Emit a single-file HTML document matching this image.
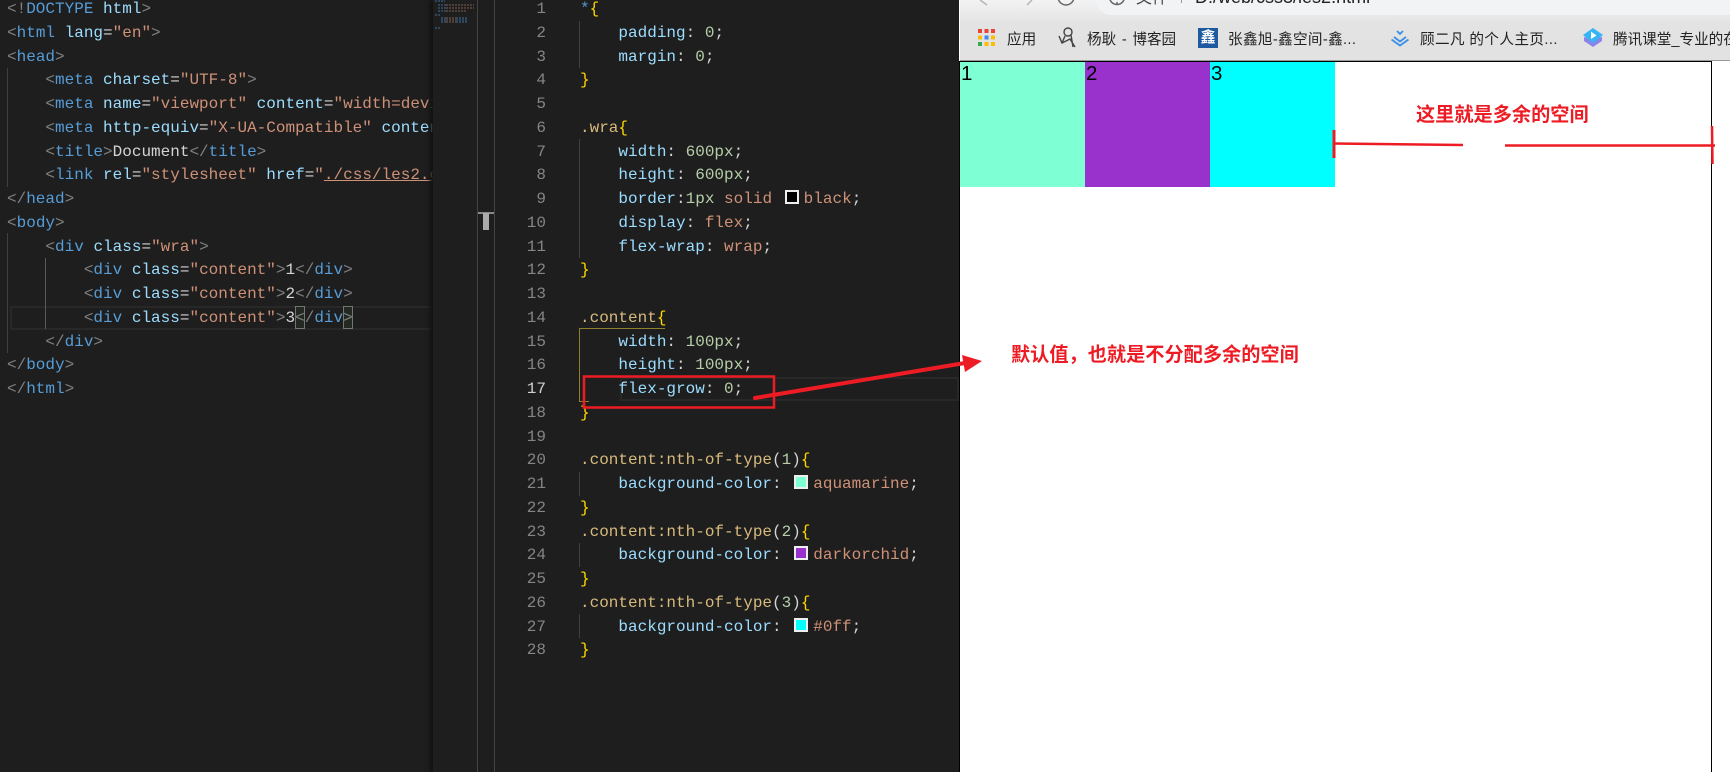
<!DOCTYPE html>
<html lang="zh"><head><meta charset="utf-8"><title>Flex grow</title>
<style>
*{margin:0;padding:0;box-sizing:border-box}
html,body{width:1730px;height:772px;overflow:hidden;background:#1e1e1e}
body{position:relative;font-family:"Liberation Sans","Noto Sans CJK SC",sans-serif}
.abs{position:absolute}
pre{position:absolute;font:16px/23.75px "Liberation Mono",monospace;color:#d4d4d4;white-space:pre;z-index:2}
.b{color:#808080}.t{color:#569cd6}.a{color:#9cdcfe}.s{color:#ce9178}.w{color:#d4d4d4}
.y{color:#ffd700}.c{color:#d7ba7d}.n{color:#b5cea8}
.sw{display:inline-block;width:14px;height:14px;border:2px solid #eee;vertical-align:-1px;margin:0 5px 0 3px}
#nums{left:495px;width:51px;text-align:right;top:-2px;color:#858585}
.g{position:absolute;width:1px;background:#404040;z-index:1}
.bm{position:absolute;top:30px;font-size:14.6px;line-height:20px;color:#222;white-space:nowrap;z-index:4}
.red{position:absolute;color:#ed1c24;font-weight:bold;font-size:19.2px;line-height:24px;white-space:nowrap;z-index:6}
.box{position:absolute;top:62px;width:125px;height:125px;z-index:3;color:#000;font-size:20.5px;line-height:24px;padding-left:1px}
</style></head><body>
<div class="abs" style="left:10px;top:306px;width:423px;height:24px;border:2px solid #282828;z-index:0"></div>
<div class="abs" style="left:620px;top:377px;width:339px;height:24px;border:2px solid #282828;z-index:0"></div>
<div class="g" style="left:7px;top:68px;height:119px"></div>
<div class="g" style="left:7px;top:233px;height:120px"></div>
<div class="g" style="left:45px;top:258px;height:71px;background:#5a5a5a"></div>
<div class="abs" style="left:295px;top:306px;width:10px;height:23px;border:1px solid #6f7a6f;background:#232823;z-index:1"></div>
<div class="abs" style="left:343px;top:306px;width:10px;height:23px;border:1px solid #6f7a6f;background:#232823;z-index:1"></div>
<div style="position:absolute;left:0;top:0;width:433px;height:772px;overflow:hidden;z-index:2">
<pre style="left:7px;top:-2px"><span class="b">&lt;!</span><span class="t">DOCTYPE</span> <span class="a">html</span><span class="b">&gt;</span>
<span class="b">&lt;</span><span class="t">html</span> <span class="a">lang</span><span class="w">=</span><span class="s">"en"</span><span class="b">&gt;</span>
<span class="b">&lt;</span><span class="t">head</span><span class="b">&gt;</span>
    <span class="b">&lt;</span><span class="t">meta</span> <span class="a">charset</span><span class="w">=</span><span class="s">"UTF-8"</span><span class="b">&gt;</span>
    <span class="b">&lt;</span><span class="t">meta</span> <span class="a">name</span><span class="w">=</span><span class="s">"viewport"</span> <span class="a">content</span><span class="w">=</span><span class="s">"width=device-width"</span>
    <span class="b">&lt;</span><span class="t">meta</span> <span class="a">http-equiv</span><span class="w">=</span><span class="s">"X-UA-Compatible"</span> <span class="a">content</span><span class="w">=</span><span class="s">"ie=edge"</span>
    <span class="b">&lt;</span><span class="t">title</span><span class="b">&gt;</span>Document<span class="b">&lt;/</span><span class="t">title</span><span class="b">&gt;</span>
    <span class="b">&lt;</span><span class="t">link</span> <span class="a">rel</span><span class="w">=</span><span class="s">"stylesheet"</span> <span class="a">href</span><span class="w">=</span><span class="s">"<span style="text-decoration:underline">./css/les2.css</span>"</span>
<span class="b">&lt;/</span><span class="t">head</span><span class="b">&gt;</span>
<span class="b">&lt;</span><span class="t">body</span><span class="b">&gt;</span>
    <span class="b">&lt;</span><span class="t">div</span> <span class="a">class</span><span class="w">=</span><span class="s">"wra"</span><span class="b">&gt;</span>
        <span class="b">&lt;</span><span class="t">div</span> <span class="a">class</span><span class="w">=</span><span class="s">"content"</span><span class="b">&gt;</span>1<span class="b">&lt;/</span><span class="t">div</span><span class="b">&gt;</span>
        <span class="b">&lt;</span><span class="t">div</span> <span class="a">class</span><span class="w">=</span><span class="s">"content"</span><span class="b">&gt;</span>2<span class="b">&lt;/</span><span class="t">div</span><span class="b">&gt;</span>
        <span class="b">&lt;</span><span class="t">div</span> <span class="a">class</span><span class="w">=</span><span class="s">"content"</span><span class="b">&gt;</span>3<span class="b">&lt;/</span><span class="t">div</span><span class="b">&gt;</span>
    <span class="b">&lt;/</span><span class="t">div</span><span class="b">&gt;</span>
<span class="b">&lt;/</span><span class="t">body</span><span class="b">&gt;</span>
<span class="b">&lt;/</span><span class="t">html</span><span class="b">&gt;</span></pre>
</div>
<!-- minimap -->
<div class="abs" style="left:433px;top:0;width:44px;height:772px;background:#1e1e1e;box-shadow:-3px 0 4px #111;z-index:3"></div>
<svg class="abs" style="left:433px;top:0;z-index:4" width="62" height="240">
<g stroke-width="1" fill="none" stroke-dasharray="2 1">
<path d="M2 1h10" stroke="#3f6f99"/>
<path d="M5 5h8M5 8h8M5 11h8" stroke="#3f6f99"/>
<path d="M13 5h28M13 8h28M13 11h20" stroke="#7c5f50"/>
<path d="M2 15h5" stroke="#3f6f99"/>
<path d="M8 18h5M8 20h5M8 22h5" stroke="#3f6f99"/>
<path d="M13 18h10M13 20h10M13 22h10" stroke="#7c5f50"/>
<path d="M23 18h12M23 20h12M23 22h12" stroke="#3f6f99"/>
<path d="M2 28h5" stroke="#3f6f99"/>
</g>
<path d="M-1 100v9M-1 132h1M-1 175h1" stroke="#a0704f" fill="none"/>
<path d="M44.500 0V240" stroke="#444"/><path d="M61.500 0V240" stroke="#444"/>
</svg>
<div class="abs" style="left:478px;top:212px;width:16px;height:2px;background:#888;z-index:4"></div>
<div class="abs" style="left:483px;top:213px;width:6px;height:17px;background:#aaa;z-index:4"></div>
<div class="abs" style="left:477px;top:240px;width:1px;height:532px;background:#444;z-index:4"></div>
<div class="abs" style="left:494px;top:240px;width:1px;height:532px;background:#444;z-index:4"></div>
<!-- right editor -->
<pre id="nums">1
2
3
4
5
6
7
8
9
10
11
12
13
14
15
16
<span style="color:#d0d0d0">17</span>
18
19
20
21
22
23
24
25
26
27
28</pre>
<div class="g" style="left:579px;top:21px;height:47px"></div>
<div class="g" style="left:579px;top:139px;height:119px"></div>
<div class="abs" style="left:579px;top:328px;width:86px;height:74px;border-left:1px solid #8f8030;border-top:1px solid #8f8030;z-index:1"></div>
<div class="abs" style="left:579px;top:401px;width:10px;height:1px;background:#8f8030;z-index:1"></div>
<div class="g" style="left:579px;top:472px;height:24px"></div>
<div class="g" style="left:579px;top:543px;height:24px"></div>
<div class="g" style="left:579px;top:614px;height:24px"></div>
<div style="position:absolute;left:0;top:0;width:959px;height:772px;overflow:hidden;z-index:2">
<pre style="left:580px;top:-2px"><span class="t">*</span><span class="y">{</span>
    <span class="a">padding</span>: <span class="n">0</span>;
    <span class="a">margin</span>: <span class="n">0</span>;
<span class="y">}</span>

<span class="c">.wra</span><span class="y">{</span>
    <span class="a">width</span>: <span class="n">600px</span>;
    <span class="a">height</span>: <span class="n">600px</span>;
    <span class="a">border</span>:<span class="n">1px</span> <span class="s">solid</span> <i class="sw" style="background:#000"></i><span class="s">black</span>;
    <span class="a">display</span>: <span class="s">flex</span>;
    <span class="a">flex-wrap</span>: <span class="s">wrap</span>;
<span class="y">}</span>

<span class="c">.content</span><span class="y">{</span>
    <span class="a">width</span>: <span class="n">100px</span>;
    <span class="a">height</span>: <span class="n">100px</span>;
    <span class="a">flex-grow</span>: <span class="n">0</span>;
<span class="y">}</span>

<span class="c">.content:nth-of-type</span>(<span class="n">1</span>)<span class="y">{</span>
    <span class="a">background-color</span>: <i class="sw" style="background:#7fffd4"></i><span class="s">aquamarine</span>;
<span class="y">}</span>
<span class="c">.content:nth-of-type</span>(<span class="n">2</span>)<span class="y">{</span>
    <span class="a">background-color</span>: <i class="sw" style="background:#9932cc"></i><span class="s">darkorchid</span>;
<span class="y">}</span>
<span class="c">.content:nth-of-type</span>(<span class="n">3</span>)<span class="y">{</span>
    <span class="a">background-color</span>: <i class="sw" style="background:#0ff"></i><span class="s">#0ff</span>;
<span class="y">}</span></pre>
</div>
<!-- browser -->
<div class="abs" style="left:959px;top:0;width:771px;height:772px;background:#fff;z-index:3"></div>
<div class="abs" style="left:960px;top:0;width:770px;height:61px;background:linear-gradient(#f3f3f3,#e3e3e3 40%,#e2e2e2);border-bottom:1px solid #999;z-index:3"></div>
<div class="abs" style="left:1095px;top:-20px;width:640px;height:35px;background:#f1f3f4;border-radius:0 0 0 17px;z-index:3"></div>
<svg class="abs" style="left:960px;top:0;z-index:4" width="175" height="16" fill="none" stroke="#b5b5b5" stroke-width="1.500">
<path d="M20 0L27 5M72 0L67 5"/>
<circle cx="106" cy="-3" r="8" stroke="#666"/>
<circle cx="157" cy="-3" r="7.500" stroke="#666"/><path d="M157 2v2" stroke="#666"/>
</svg>
<div class="abs" style="left:1136px;top:-13px;font-size:16px;line-height:20px;color:#444;white-space:nowrap;z-index:4">文件<span style="display:inline-block;width:1px;height:16px;background:#999;margin:0 13px 0 13px"></span><span style="color:#222;font-size:18px">D:/web/css3/les2.html</span></div>
<!-- bookmarks -->
<svg class="abs" style="left:978px;top:29px;z-index:4" width="18" height="17">
<rect x="0" y="0" width="4" height="4" fill="#ea4335"/><rect x="6.500" y="0" width="4" height="4" fill="#ea4335"/><rect x="13" y="0" width="4" height="4" fill="#ea4335"/>
<rect x="0" y="6.500" width="4" height="4" fill="#fbbc05"/><rect x="6.500" y="6.500" width="4" height="4" fill="#4285f4"/><rect x="13" y="6.500" width="4" height="4" fill="#fbbc05"/>
<rect x="0" y="13" width="4" height="4" fill="#34a853"/><rect x="6.500" y="13" width="4" height="4" fill="#fbbc05"/><rect x="13" y="13" width="4" height="4" fill="#fbbc05"/></svg>
<div class="bm" style="left:1007px">应用</div>
<svg class="abs" style="left:1057px;top:27px;z-index:4" width="21" height="22" fill="none" stroke="#444" stroke-width="1.400">
<circle cx="11" cy="5" r="4"/><path d="M2 9L5 16L13 12L18 20M14 8L16 20M8 9L5 16"/></svg>
<div class="bm" style="left:1087px;word-spacing:1.600px">杨耿 - 博客园</div>
<div class="abs" style="left:1198px;top:28px;width:20px;height:20px;background:#1d5aa0;color:#fff;font-size:15px;line-height:20px;text-align:center;overflow:hidden;z-index:4;font-weight:bold">鑫</div>
<div class="bm" style="left:1228px;letter-spacing:.35px">张鑫旭-鑫空间-鑫...</div>
<svg class="abs" style="left:1391px;top:29px;z-index:4" width="19" height="18" fill="none" stroke="#3a8ee6" stroke-width="1.800">
<path d="M6 2l3 3l3 -3M3 8l6 4.500l6 -4.500M0.500 10.500l8.500 6l8.500 -6"/></svg>
<div class="bm" style="left:1420px;letter-spacing:.4px">顾二凡 的个人主页...</div>
<svg class="abs" style="left:1583px;top:27px;z-index:4" width="20" height="22">
<path d="M10 12L19 10V14L10 20L1 14V10Z" fill="#8b84e8"/><path d="M10 1L20 8L10 16L0 8Z" fill="#35b5f5"/><path d="M8 4.500L13.500 8.500L8 12Z" fill="#fff"/></svg>
<div class="bm" style="left:1613px">腾讯课堂_专业的在</div>
<!-- page -->
<div class="abs" style="left:959px;top:61px;width:753px;height:711px;border:1px solid #000;border-bottom:0;background:#fff;z-index:3"></div>
<div class="box" style="left:960px;background:#7fffd4">1</div>
<div class="box" style="left:1085px;background:#9932cc">2</div>
<div class="box" style="left:1210px;background:#0ff">3</div>
<!-- annotations -->
<svg class="abs" style="left:0;top:0;z-index:5" width="1730" height="772" fill="none" stroke="#ed1c24">
<rect x="584" y="376.500" width="190" height="31" stroke-width="2.500"/>
<path d="M755 398L965 363" stroke-width="4" stroke-linecap="round"/>
<path d="M982 361L962 355L965 372Z" fill="#ed1c24" stroke="none"/>
<path d="M1334 130V158" stroke-width="3"/>
<path d="M1334 143.500L1463 145" stroke-width="2.500"/>
<path d="M1505 145.500H1715" stroke-width="2.500"/>
<path d="M1712 126L1712.500 164" stroke-width="2.500"/>
</svg>
<div class="red" style="left:1416px;top:104px">这里就是多余的空间</div>
<div class="red" style="left:1011px;top:344px">默认值&#xFF0C;也就是不分配多余的空间</div>
</body></html>
